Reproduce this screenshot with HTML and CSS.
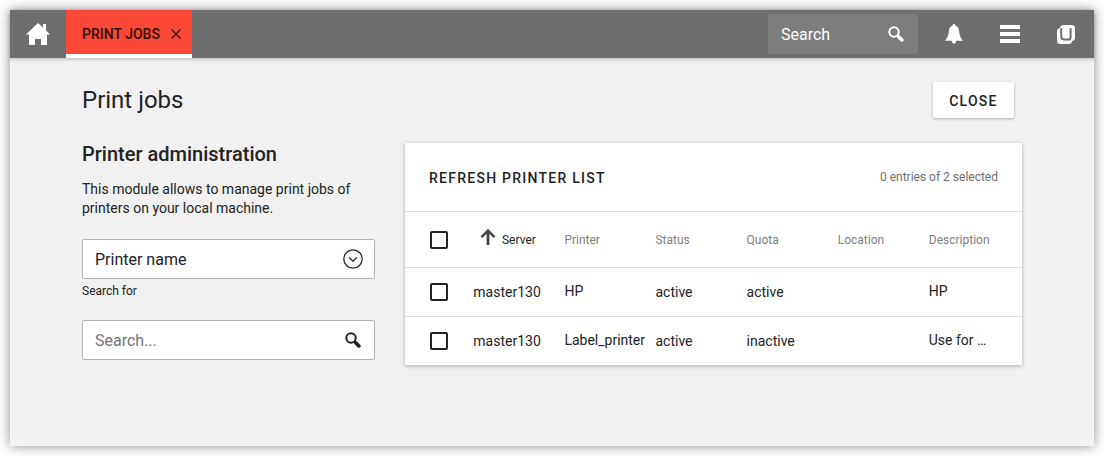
FILE: index.html
```html
<!DOCTYPE html>
<html lang="en">
<head>
<meta charset="utf-8">
<title>Print jobs</title>
<link rel="stylesheet" href="styles.css">
</head>
<body>
<div class="window">
  <header class="bar">
    <div class="home">
      <svg width="24" height="24" viewBox="0 0 24 24" fill="#fff"><path d="M12 1L0 12.500h3V23h6v-6h6v6h6V12.500h3L20 8.600V2h-3v3.700z"/></svg>
    </div>
    <div class="tab">
      <span>PRINT JOBS</span>
      <svg width="10" height="10" viewBox="0 0 10 10" stroke="#3a1a16" stroke-width="1.500"><path d="M.5.5l9 9M9.500.5l-9 9"/></svg>
    </div>
    <div class="bar-search">
      <span>Search</span>
      <svg width="16" height="16" viewBox="0 0 16 16" fill="none" stroke="#fff"><circle cx="6" cy="6" r="4.700" stroke-width="2"/><path d="M9.300 9.300l1.500 1.500" stroke-width="2"/><path d="M10.900 10.900l3 3" stroke-width="3.600" stroke-linecap="round"/></svg>
    </div>
    <div class="bar-icon">
      <svg width="18" height="20" viewBox="0 0 18 20" fill="#fff"><path d="M9 0c.9 0 1.300.6 1.400 1.400C13 2.300 14 4.500 14.200 7.500c.3 4 1.300 6.500 3.800 9.300h-6.800C11 18.700 10.300 19.600 9 19.600S7 18.700 6.800 16.800H0c2.500-2.800 3.500-5.300 3.800-9.300C4 4.500 5 2.300 7.600 1.400 7.700.6 8.100 0 9 0z"/></svg>
    </div>
    <div class="bar-icon">
      <svg width="20" height="18" viewBox="0 0 20 18" fill="#fff"><path d="M0 0h20v4H0zM0 7h20v4H0zM0 14h20v4H0z"/></svg>
    </div>
    <div class="bar-icon">
      <svg width="18" height="19" viewBox="0 0 18 19"><rect x="3" width="15" height="16" rx="3.500" fill="#fff"/><rect y="3" width="15" height="16" rx="3.500" fill="#fff"/><path fill="none" stroke="#6e6e6e" stroke-width="2" d="M4.200 3.200v8.300q0 3 3 3h6.600M13.600 3.200v9.300q0 1.800-1.600 2"/></svg>
    </div>
  </header>

  <div class="title-row">
    <h1>Print jobs</h1>
    <button class="close">CLOSE</button>
  </div>

  <main class="content">
    <section class="side">
      <h2>Printer administration</h2>
      <p>This module allows to manage print jobs of printers on your local machine.</p>
      <div class="field">
        <span>Printer name</span>
        <svg width="20" height="20" viewBox="0 0 20 20" fill="none" stroke="#222"><circle cx="10" cy="10" r="9.200" stroke-width="1.200"/><path d="M6.200 8.500l3.800 3.700 3.800-3.700" stroke-width="1.300"/></svg>
      </div>
      <div class="label">Search for</div>
      <div class="field">
        <span class="placeholder">Search...</span>
        <svg class="glass" width="16" height="16" viewBox="0 0 16 16" fill="none" stroke="#222"><circle cx="6" cy="6" r="4.700" stroke-width="2"/><path d="M9.300 9.300l1.500 1.500" stroke-width="2"/><path d="M10.900 10.900l3 3" stroke-width="3.600" stroke-linecap="round"/></svg>
      </div>
    </section>

    <section class="card">
      <div class="toolbar">
        <span class="refresh">REFRESH PRINTER LIST</span>
        <span class="count">0 entries of 2 selected</span>
      </div>
      <div class="row head">
        <i class="check"></i>
        <span class="sorted"><svg width="16" height="16" viewBox="0 0 16 16" fill="none" stroke="#444"><path d="M8 16V2" stroke-width="2.800"/><path d="M1.500 8.200L8 1.700l6.500 6.500" stroke-width="2.500"/></svg>Server</span>
        <span>Printer</span><span>Status</span><span>Quota</span><span>Location</span><span>Description</span>
      </div>
      <div class="row">
        <i class="check"></i>
        <span>master130</span><span class="raised">HP</span><span>active</span><span>active</span><span></span><span class="raised">HP</span>
      </div>
      <div class="row">
        <i class="check"></i>
        <span>master130</span><span class="raised">Label_printer</span><span>active</span><span>inactive</span><span></span><span class="raised">Use for …</span>
      </div>
    </section>
  </main>
</div>
</body>
</html>
```
FILE: styles.css
```css
* { box-sizing: border-box; }
body {
  margin: 0;
  padding: 10px;
  height: 456px;
  overflow: hidden;
  background: #fff;
  color: #222;
  font-family: Roboto, "Liberation Sans", sans-serif;
}
svg { display: block; flex: none; }
.window {
  height: 436px;
  background: #f1f1f1;
  box-shadow: 0 0 12px rgba(0, 0, 0, .45);
}
.bar {
  display: flex;
  height: 48px;
  background: #6e6e6e;
  box-shadow: 0 1px 4px rgba(0, 0, 0, .25);
}
.home {
  width: 56px;
  padding: 12px 16px;
}
.tab {
  display: flex;
  align-items: center;
  justify-content: space-between;
  width: 126px;
  padding: 4px 11px 0 16px;
  background: #fa4736;
  border-bottom: 4px solid #fff;
  color: #31100d;
  font-size: 14px;
  font-weight: 500;
}
.bar-search {
  display: flex;
  align-items: center;
  justify-content: space-between;
  width: 150px;
  height: 40px;
  margin: 4px 8px 0 auto;
  padding: 0 14px 0 13px;
  border-radius: 3px;
  background: #7d7d7d;
  color: #fff;
  font-size: 16px;
}
.bar-icon {
  display: flex;
  align-items: center;
  justify-content: center;
  width: 56px;
}
.title-row {
  display: flex;
  justify-content: space-between;
  padding: 24px 80px 0 72px;
}
h1 {
  margin: 0;
  font-size: 24px;
  line-height: 36px;
  font-weight: 400;
}
.close {
  width: 81px;
  height: 36px;
  padding: 2px 0 0;
  border: 0;
  border-radius: 2px;
  background: #fff;
  box-shadow: 0 1px 3px rgba(0, 0, 0, .3);
  color: #222;
  font: 500 14px Roboto, sans-serif;
  letter-spacing: 1.25px;
}
.content {
  display: flex;
  gap: 30px;
  align-items: flex-start;
  padding: 25px 72px 0;
}
.side { width: 293px; }
h2 {
  margin: 0;
  font-size: 20px;
  line-height: 22px;
  font-weight: 500;
}
p {
  margin: 15px 0 21px;
  font-size: 14px;
  line-height: 19px;
}
.field {
  display: flex;
  align-items: center;
  justify-content: space-between;
  height: 40px;
  padding: 0 11px 0 12px;
  border: 1px solid #b3b3b3;
  border-radius: 2px;
  background: #fff;
  font-size: 16px;
}
.placeholder { color: #757575; }
.glass { margin-right: 2px; }
.label {
  margin: 4px 0 21px;
  font-size: 12px;
  line-height: 16px;
}
.card {
  width: 617px;
  background: #fff;
  box-shadow: 0 1px 4px rgba(0, 0, 0, .3);
}
.toolbar {
  display: flex;
  align-items: center;
  justify-content: space-between;
  height: 68px;
  padding: 0 24px;
}
.refresh {
  padding-top: 2px;
  font-size: 14px;
  font-weight: 500;
  letter-spacing: 1.25px;
}
.count { color: #6e6e6e; font-size: 12px; }
.row {
  display: grid;
  grid-template-columns: 43.3px repeat(6, 91.1px);
  align-items: center;
  height: 49px;
  padding-left: 25px;
  border-top: 1px solid #dedede;
  font-size: 14px;
}
.head {
  height: 56px;
  color: #808080;
  font-size: 12px;
}
.check {
  width: 18px;
  height: 18px;
  border: 2px solid #222;
  border-radius: 2px;
}
.sorted {
  display: flex;
  align-items: center;
  gap: 6px;
  padding-left: 6.7px;
  color: #222;
}
.sorted svg { margin-top: -5px; }
.raised { padding-bottom: 2px; }
```
